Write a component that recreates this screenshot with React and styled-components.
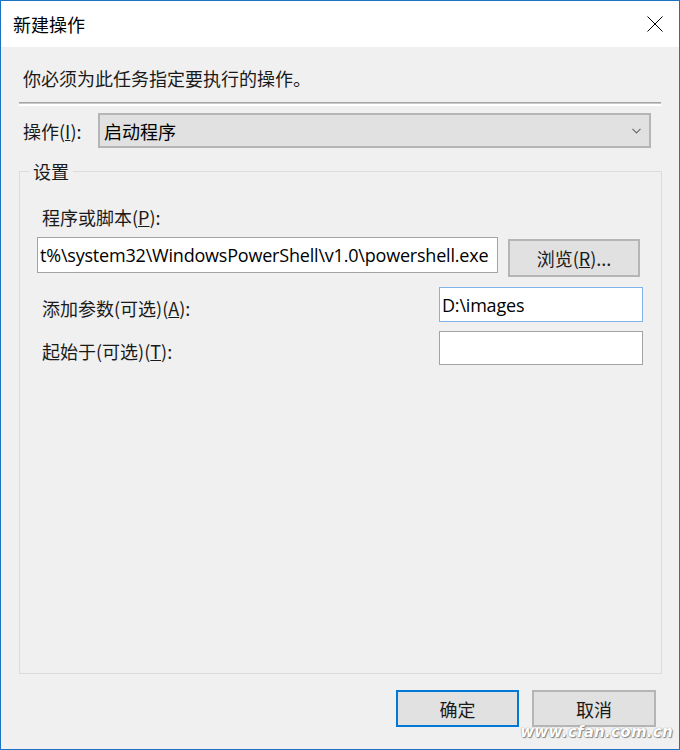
import React from 'react';
import styled, { createGlobalStyle } from 'styled-components';

const cjk = `"Noto Sans CJK SC", "Noto Sans", sans-serif`;
const latin = `"Open Sans", "Noto Sans CJK SC", sans-serif`;

const GlobalStyle = createGlobalStyle`
  html, body {
    margin: 0;
    padding: 0;
    background: #fff;
  }
  * {
    box-sizing: border-box;
  }
`;

const Window = styled.div`
  position: relative;
  width: 680px;
  height: 750px;
  border: 1px solid #1a73c5;
  display: flex;
  flex-direction: column;
  font-family: ${cjk};
  font-size: 18px;
  color: #000;
`;

const TitleBar = styled.div`
  flex: none;
  height: 46px;
  background: #fff;
  display: flex;
  align-items: center;
  justify-content: space-between;
  padding: 0 16px 0 12px;
`;

const Title = styled.span`
  line-height: 24px;
`;

const CloseButton = styled.button`
  border: 0;
  background: none;
  padding: 0;
  width: 16px;
  height: 16px;
  display: flex;
`;

const Body = styled.div`
  flex: 1;
  background: #f0f0f0;
  display: flex;
  flex-direction: column;
  padding: 0 17px 22px 18px;
`;

const Instruction = styled.p`
  margin: 19px 0 0 4px;
  line-height: 24px;
  color: #1a1a1a;
`;

const Separator = styled.div`
  margin: 12px 1px 0 0;
  height: 2px;
  background: #a5a5a5;
  border-bottom: 1px solid #c8c8c8;
  box-shadow: 0 2px 0 #fff;
`;

const ComboRow = styled.div`
  display: flex;
  align-items: center;
  margin-top: 9px;
  height: 35px;
`;

const Label = styled.label`
  display: block;
  line-height: 24px;
  white-space: nowrap;
  width: ${p => p.$width || 'auto'};
  margin: ${p => p.$margin || '0'};
  color: #1a1a1a;
`;

const Combo = styled.div`
  width: 553px;
  height: 35px;
  background: #e1e1e1;
  border: 2px solid #b5b5b5;
  display: flex;
  align-items: center;
  justify-content: space-between;
  padding: 0 8px 0 4px;
`;

const Group = styled.fieldset`
  flex: 1;
  margin: 11px 0 0;
  padding: 0;
  border: 1px solid #dcdcdc;
  min-width: 0;
`;

const Legend = styled.legend`
  margin-left: 9px;
  padding: 0 4px;
  line-height: 24px;
  color: #1a1a1a;
`;

const GroupContent = styled.div`
  display: flex;
  flex-direction: column;
  padding: 22px 18px 0 17px;
`;

const FieldRow = styled.div`
  display: flex;
  align-items: flex-start;
  justify-content: space-between;
  margin-top: ${p => p.$top || '0'};
`;

const TextBox = styled.input`
  display: block;
  width: ${p => p.$width};
  height: ${p => p.$height || '35px'};
  margin: 0;
  padding: 0 2px;
  background: #fff;
  border: 1px solid ${p => (p.$focused ? '#7eb4ea' : '#a3a3a3')};
  font-family: ${latin};
  font-size: 18px;
  letter-spacing: -0.2px;
  color: #000;
  outline: none;
`;

const Button = styled.button`
  width: ${p => p.$width};
  height: ${p => p.$height || '37px'};
  margin: ${p => p.$margin || '0'};
  background: #e1e1e1;
  border: 2px solid ${p => (p.$primary ? '#0078d7' : '#b5b5b5')};
  font-family: ${cjk};
  font-size: 18px;
  color: #1a1a1a;
  padding: 0;
  line-height: 24px;
`;

const ButtonRow = styled.div`
  display: flex;
  justify-content: flex-end;
  gap: 13px;
  margin: 16px 6px 0 0;
`;

const Watermark = styled.span`
  position: absolute;
  right: 6px;
  bottom: 8px;
  font-family: "DejaVu Sans", sans-serif;
  font-style: italic;
  font-weight: bold;
  font-size: 15px;
  letter-spacing: 0.3px;
  color: #fff;
  text-shadow: 0 0 1px #666, 1px 1px 1px #888;
`;

const Key = ({ children }) => <u>{children}</u>;

const CloseIcon = () => (
  <svg width="16" height="16" viewBox="0 0 16 16">
    <path d="M0.5 0.5 L15.5 15.5 M15.5 0.5 L0.5 15.5" stroke="#000" strokeWidth="1" fill="none" />
  </svg>
);

const Chevron = () => (
  <svg width="9" height="6" viewBox="0 0 9 6">
    <path d="M0.5 0.8 L4.5 4.8 L8.5 0.8" stroke="#6d6d6d" strokeWidth="1.2" fill="none" />
  </svg>
);

const App = () => {
  return (
    <>
      <GlobalStyle />
      <Window>
        <TitleBar>
          <Title>新建操作</Title>
          <CloseButton aria-label="关闭">
            <CloseIcon />
          </CloseButton>
        </TitleBar>
        <Body>
          <Instruction>你必须为此任务指定要执行的操作。</Instruction>
          <Separator />
          <ComboRow>
            <Label $width="75px" $margin="0 0 0 4px">
              操作(<Key>I</Key>):
            </Label>
            <Combo>
              <span>启动程序</span>
              <Chevron />
            </Combo>
          </ComboRow>
          <Group>
            <Legend>设置</Legend>
            <GroupContent>
              <Label $margin="0 0 0 5px">
                程序或脚本(<Key>P</Key>):
              </Label>
              <FieldRow $top="8px">
                <TextBox
                  $width="461px"
                  $height="36px"
                  readOnly
                  value="t%\system32\WindowsPowerShell\v1.0\powershell.exe"
                />
                <Button $width="132px" $height="38px" $margin="2px 3px 0 0">
                  浏览(<Key>R</Key>)...
                </Button>
              </FieldRow>
              <FieldRow $top="10px">
                <Label $margin="9px 0 0 5px">
                  添加参数(可选)(<Key>A</Key>):
                </Label>
                <TextBox $width="204px" $focused readOnly value="D:\images" />
              </FieldRow>
              <FieldRow $top="9px">
                <Label $margin="8px 0 0 5px">
                  起始于(可选)(<Key>T</Key>):
                </Label>
                <TextBox $width="204px" $height="34px" readOnly value="" />
              </FieldRow>
            </GroupContent>
          </Group>
          <ButtonRow>
            <Button $width="123px" $primary>
              确定
            </Button>
            <Button $width="124px">取消</Button>
          </ButtonRow>
        </Body>
        <Watermark>www.cfan.com.cn</Watermark>
      </Window>
    </>
  );
};

export default App;
